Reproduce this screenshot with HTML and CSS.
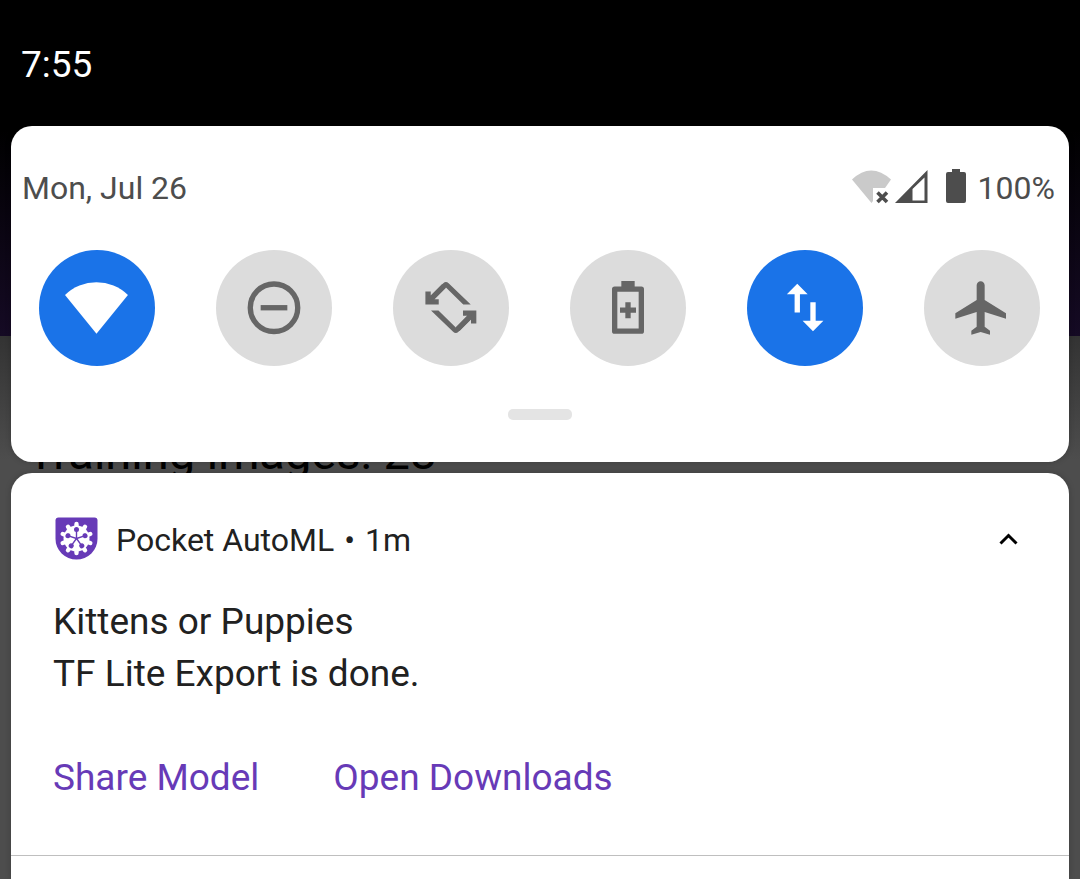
FILE: index.html
```html
<!DOCTYPE html>
<html lang="en">
<head>
<meta charset="utf-8">
<meta name="viewport" content="width=device-width, initial-scale=1">
<title>Notifications</title>
<link rel="stylesheet" href="styles.css">
</head>
<body>
<div class="shade">
  <header class="status-bar"><time>7:55</time></header>

  <section class="card quick-settings" aria-label="Quick settings">
    <div class="info-row">
      <span>Mon, Jul 26</span>
      <div class="system-icons">
        <svg class="icon-wifi" viewBox="0 0 40 36" aria-hidden="true">
          <path fill="#cacaca" d="M0 9.500Q19-8.500 39 9.500L33 18H21V31L19.500 33Z"/>
          <path fill="none" stroke="#4d4d4d" stroke-width="3.600" d="M25.500 22.500L35 32M35 22.500L25.500 32"/>
        </svg>
        <svg class="icon-cell" viewBox="0 0 34 36" aria-hidden="true">
          <path fill="#4d4d4d" fill-rule="evenodd" d="M0 33L32.500 0V33ZM17.500 19V30.500H29.500V7.500Z"/>
        </svg>
        <svg class="icon-battery" viewBox="0 0 20 36" aria-hidden="true">
          <path fill="#4d4d4d" d="M6 -1H14V2H18Q20 2 20 4V31Q20 33 18 33H2Q0 33 0 31V4Q0 2 2 2H6Z"/>
        </svg>
        <span>100%</span>
      </div>
    </div>

    <div class="tiles">
      <button class="tile tile-on" type="button" aria-label="Wi-Fi" aria-pressed="true">
        <svg viewBox="0 0 24 24"><path fill="currentColor" d="M11.800 21.700L0 7.100A16.900 16.900 0 0 1 23.600 7.100Z"/></svg>
      </button>
      <button class="tile" type="button" aria-label="Do not disturb">
        <svg viewBox="0 0 24 24"><g fill="none" stroke="currentColor" stroke-width="2"><circle cx="12" cy="11.900" r="8.900"/><path d="M7 11.900H17"/></g></svg>
      </button>
      <button class="tile" type="button" aria-label="Auto-rotate">
        <svg viewBox="0 0 24 24">
          <g fill="none" stroke="currentColor" stroke-width="2">
            <path d="M3.400 5.800V9.700H7.400M3.400 9.700L9.400 3.700"/>
            <path d="M20.500 17.800V13.900H16.500M20.500 13.900L14.500 19.900"/>
          </g>
          <path fill="currentColor" d="M3.400 8.500L9.100 2.700Q10.100 1.800 11.100 2.700L19.400 10.700H16.600L10.100 4.300L5 9.500Z"/>
          <path fill="currentColor" d="M20.500 15.100L14.800 20.900Q13.800 21.800 12.800 20.900L4.500 12.900H7.300L13.800 19.300L18.900 14.100Z"/>
        </svg>
      </button>
      <button class="tile" type="button" aria-label="Battery saver">
        <svg viewBox="0 0 24 24">
          <path fill="currentColor" fill-rule="evenodd" d="M9.500 1.900H14.500V3.900H17Q18 3.900 18 4.900V20.700Q18 21.700 17 21.700H7Q6 21.700 6 20.700V4.900Q6 3.900 7 3.900H9.500ZM8 5.900V19.700H16V5.900ZM11 9.800H13V11.800H15V13.800H13V15.800H11V13.800H9V11.800H11Z"/>
        </svg>
      </button>
      <button class="tile tile-on" type="button" aria-label="Mobile data" aria-pressed="true">
        <svg viewBox="0 0 24 24"><path fill="currentColor" d="M9.100 2.900L13 6.800H10.100V13.700H8.100V6.800H5.200ZM14.900 9.800H16V16.800H18.900L15 20.700L11.100 16.800H14V9.800Z"/></svg>
      </button>
      <button class="tile" type="button" aria-label="Airplane mode">
        <svg viewBox="0 0 24 24"><path fill="currentColor" d="M21 16v-2l-8-5V3.500c0-.830-.670-1.500-1.500-1.500S10 2.670 10 3.500V9l-8 5v2l8-2.500V19l-2 1.500V22l3.500-1 3.500 1v-1.500L13 19v-5.500l8 2.500z"/></svg>
      </button>
    </div>
    <div class="handle"></div>
  </section>

  <div class="app-behind">Training images: 28</div>

  <main class="card notifications">
    <article class="notification">
      <div class="notification-head">
        <svg class="app-logo" viewBox="0 0 43 43" aria-hidden="true">
          <path fill="#673ab7" d="M3.500 0.500H39.500Q42.500 0.500 42.500 3.500V22A21 20.500 0 0 1 0.500 22V3.500Q0.500 0.500 3.500 0.500Z"/>
          <g stroke="#fff" stroke-width="4.400" stroke-linecap="round">
            <path d="M21.500 7V36"/>
            <path d="M21.500 7V36" transform="rotate(36 21.500 21.500)"/>
            <path d="M21.500 7V36" transform="rotate(72 21.500 21.500)"/>
            <path d="M21.500 7V36" transform="rotate(108 21.500 21.500)"/>
            <path d="M21.500 7V36" transform="rotate(144 21.500 21.500)"/>
          </g>
          <circle cx="21.500" cy="21.500" r="13" fill="#fff"/>
          <g fill="#673ab7" stroke="#673ab7" stroke-width="1.400">
            <g id="spoke"><path d="M21.500 21.500V13"/><circle cx="21.500" cy="12.500" r="1.800"/></g>
            <use href="#spoke" transform="rotate(72 21.500 21.500)"/>
            <use href="#spoke" transform="rotate(144 21.500 21.500)"/>
            <use href="#spoke" transform="rotate(216 21.500 21.500)"/>
            <use href="#spoke" transform="rotate(288 21.500 21.500)"/>
          </g>
        </svg>
        <div class="source"><span>Pocket AutoML</span><span>•</span><span>1m</span></div>
        <button class="collapse" type="button" aria-label="Collapse">
          <svg viewBox="0 0 20 12"><path fill="none" stroke="#000" stroke-width="3" d="M1.500 9.500L9.500 1.500L17.500 9.500"/></svg>
        </button>
      </div>
      <p class="message">Kittens or Puppies<br>TF Lite Export is done.</p>
      <div class="actions">
        <button type="button">Share Model</button>
        <button type="button">Open Downloads</button>
      </div>
    </article>
  </main>
</div>
</body>
</html>
```
FILE: styles.css
```css
* { box-sizing: border-box; }

body {
  margin: 0;
  font-family: Roboto, "Noto Sans", sans-serif;
}

button {
  margin: 0;
  padding: 0;
  border: 0;
  background: none;
  font: inherit;
  color: inherit;
  cursor: pointer;
}

svg { display: block; overflow: visible; }

.shade {
  display: flex;
  flex-direction: column;
  min-height: 100vh;
  padding: 0 11px;
  background: linear-gradient(#000 0, #000 130px, #150a24 336px, #333 336px, #4d4d4d 460px);
}

.status-bar {
  padding: 39px 10px 35px;
  font-size: 37px;
  line-height: 52px;
  color: #fff;
}

.card {
  position: relative;
  background: #fff;
  border-radius: 21px;
  box-shadow: 0 0 6px rgba(0, 0, 0, 0.2);
}

.quick-settings { padding: 42px 0; }

.info-row {
  display: flex;
  justify-content: space-between;
  align-items: center;
  padding: 0 14px 0 11px;
  font-size: 32px;
  line-height: 40px;
  color: #4d4d4d;
}

.system-icons {
  display: flex;
  align-items: center;
}

.icon-wifi { width: 40px; height: 36px; }
.icon-cell { width: 34px; height: 36px; margin-left: 3px; }
.icon-battery { width: 20px; height: 36px; margin: 0 12px 0 17px; }

.tiles {
  display: flex;
  justify-content: space-between;
  margin-top: 42px;
  padding: 0 29px 0 28px;
}

.tile {
  display: grid;
  place-items: center;
  width: 116px;
  height: 116px;
  border-radius: 50%;
  background: #dcdcdc;
  color: #666;
}

.tile svg { width: 64px; height: 64px; }

.tile-on {
  background: #1a73e8;
  color: #fff;
}

.handle {
  width: 64px;
  height: 11px;
  margin: 43px auto 0;
  border-radius: 5px;
  background: #e4e4e4;
}

.app-behind {
  display: flex;
  align-items: flex-end;
  height: 11px;
  padding-left: 16px;
  font-size: 47px;
  line-height: 40px;
  white-space: nowrap;
  color: #000;
}

.notifications {
  flex: 1;
  padding-bottom: 23px;
  border-radius: 21px 21px 0 0;
}

.notification {
  padding: 42px 42px 51px;
  border-bottom: 1px solid #bfbfbf;
  color: #212121;
}

.notification-head {
  display: flex;
  align-items: center;
  font-size: 32px;
  line-height: 50px;
}

.app-logo {
  width: 43px;
  height: 43px;
  margin: 0 18px 4px 2px;
}

.source {
  display: flex;
  gap: 10px;
}

.collapse {
  margin: 0 8px 0 auto;
  padding: 8px 0;
}

.collapse svg { width: 20px; height: 12px; }

.message {
  margin: 31px 0 52px;
  font-size: 37px;
  line-height: 52px;
}

.actions {
  display: flex;
  gap: 74px;
  font-size: 37px;
  line-height: 52px;
  color: #673ab7;
}
```
